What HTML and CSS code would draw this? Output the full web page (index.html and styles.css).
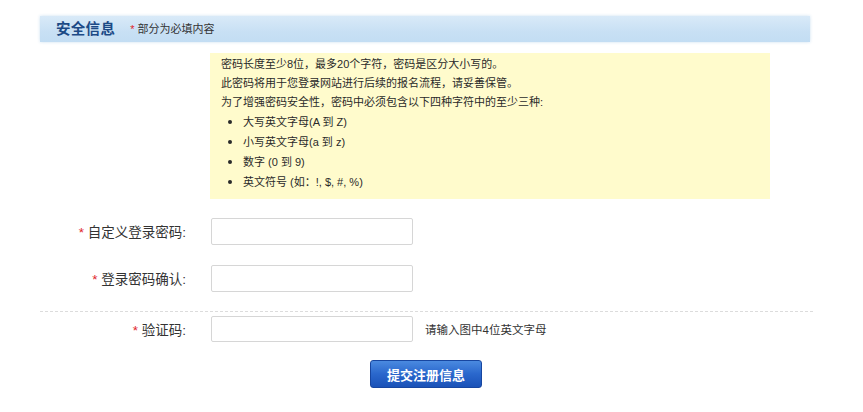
FILE: index.html
```html
<!DOCTYPE html>
<html lang="zh-CN">
<head>
<meta charset="utf-8">
<title>安全信息</title>
<link rel="stylesheet" href="styles.css">
</head>
<body>
<div class="page">
  <div class="section-head">
    <h2 class="section-title">安全信息</h2>
    <span class="section-note"><i class="star">*</i> 部分为必填内容</span>
  </div>

  <div class="notice">
    <p>密码长度至少8位，最多20个字符，密码是区分大小写的。</p>
    <p>此密码将用于您登录网站进行后续的报名流程，请妥善保管。</p>
    <p>为了增强密码安全性，密码中必须包含以下四种字符中的至少三种:</p>
    <ul>
      <li>大写英文字母(A 到 Z)</li>
      <li>小写英文字母(a 到 z)</li>
      <li>数字 (0 到 9)</li>
      <li>英文符号 (如：!, $, #, %)</li>
    </ul>
  </div>

  <form class="form">
    <div class="row">
      <label class="label"><i class="star">*</i> 自定义登录密码:</label>
      <input class="field" type="password">
    </div>
    <div class="row">
      <label class="label"><i class="star">*</i> 登录密码确认:</label>
      <input class="field" type="password">
    </div>
    <div class="divider"></div>
    <div class="row row-captcha">
      <label class="label"><i class="star">*</i> 验证码:</label>
      <input class="field field-captcha" type="text">
      <span class="hint">请输入图中4位英文字母</span>
    </div>
    <div class="actions">
      <button class="submit" type="button">提交注册信息</button>
    </div>
  </form>
</div>
</body>
</html>
```

FILE: styles.css
```css
* { box-sizing: border-box; }
html, body { margin: 0; padding: 0; background: #fff; }
body {
  font-family: "Liberation Sans", "Noto Sans CJK SC", sans-serif;
  color: #333;
  font-size: 12px;
}
.page { width: 863px; padding-top: 16px; }

.section-head {
  margin-left: 40px;
  width: 770px;
  height: 26px;
  display: flex;
  align-items: center;
  padding-left: 16px;
  background: linear-gradient(to bottom, #d9eaf8 0%, #c8e0f4 60%, #c3ddf3 100%);
  box-shadow: 0 0 3px rgba(200, 222, 240, 0.9);
}
.section-title {
  margin: 0;
  font-size: 14.5px;
  font-weight: bold;
  color: #1c4a86;
  line-height: 26px;
  letter-spacing: 0.3px;
}
.section-note {
  margin-left: 15px;
  font-size: 11px;
  color: #333;
  line-height: 26px;
}
.star { font-style: normal; color: #e0242b; }

.notice {
  margin-top: 11px;
  margin-left: 210px;
  width: 560px;
  height: 146px;
  background: #fffbcc;
  padding: 2px 11px 0;
  font-size: 11px;
  line-height: 19px;
  color: #2a2a2a;
}
.notice p { margin: 0; }
.notice ul { margin: 0; padding-left: 22px; }
.notice li { list-style: disc; }
.notice li::marker { font-size: 14px; }

.form { margin: 19px 0 0; }
.row {
  display: flex;
  align-items: center;
  height: 27px;
  margin-bottom: 20px;
}
.label {
  width: 186px;
  text-align: right;
  font-size: 13.5px;
  color: #333;
  line-height: 27px;
  padding-top: 2px;
}
.field {
  margin-left: 25px;
  width: 202px;
  height: 27px;
  border: 1px solid #d6d6d6;
  border-radius: 2px;
  background: #fff;
  padding: 0 4px;
  outline: none;
}
.divider {
  margin: 0 50px 0 40px;
  border-top: 1px dashed #dcdcdc;
  height: 0;
  margin-top: -1px;
}
.row-captcha { margin-top: 4px; height: 26px; }
.field-captcha { height: 26px; }
.hint {
  margin-left: 12px;
  font-size: 11.5px;
  color: #333;
}
.actions {
  display: flex;
  padding-left: 370px;
  margin-top: -2px;
}
.submit {
  width: 112px;
  height: 28px;
  border: 1px solid #1746a0;
  border-radius: 3px;
  background: linear-gradient(to bottom, #4a8ae0 0%, #2a67cc 50%, #1a52b8 100%);
  color: #fff;
  font-family: "Liberation Sans", "Noto Sans CJK SC", sans-serif;
  font-size: 13px;
  font-weight: bold;
  padding: 0;
  cursor: pointer;
}
```
